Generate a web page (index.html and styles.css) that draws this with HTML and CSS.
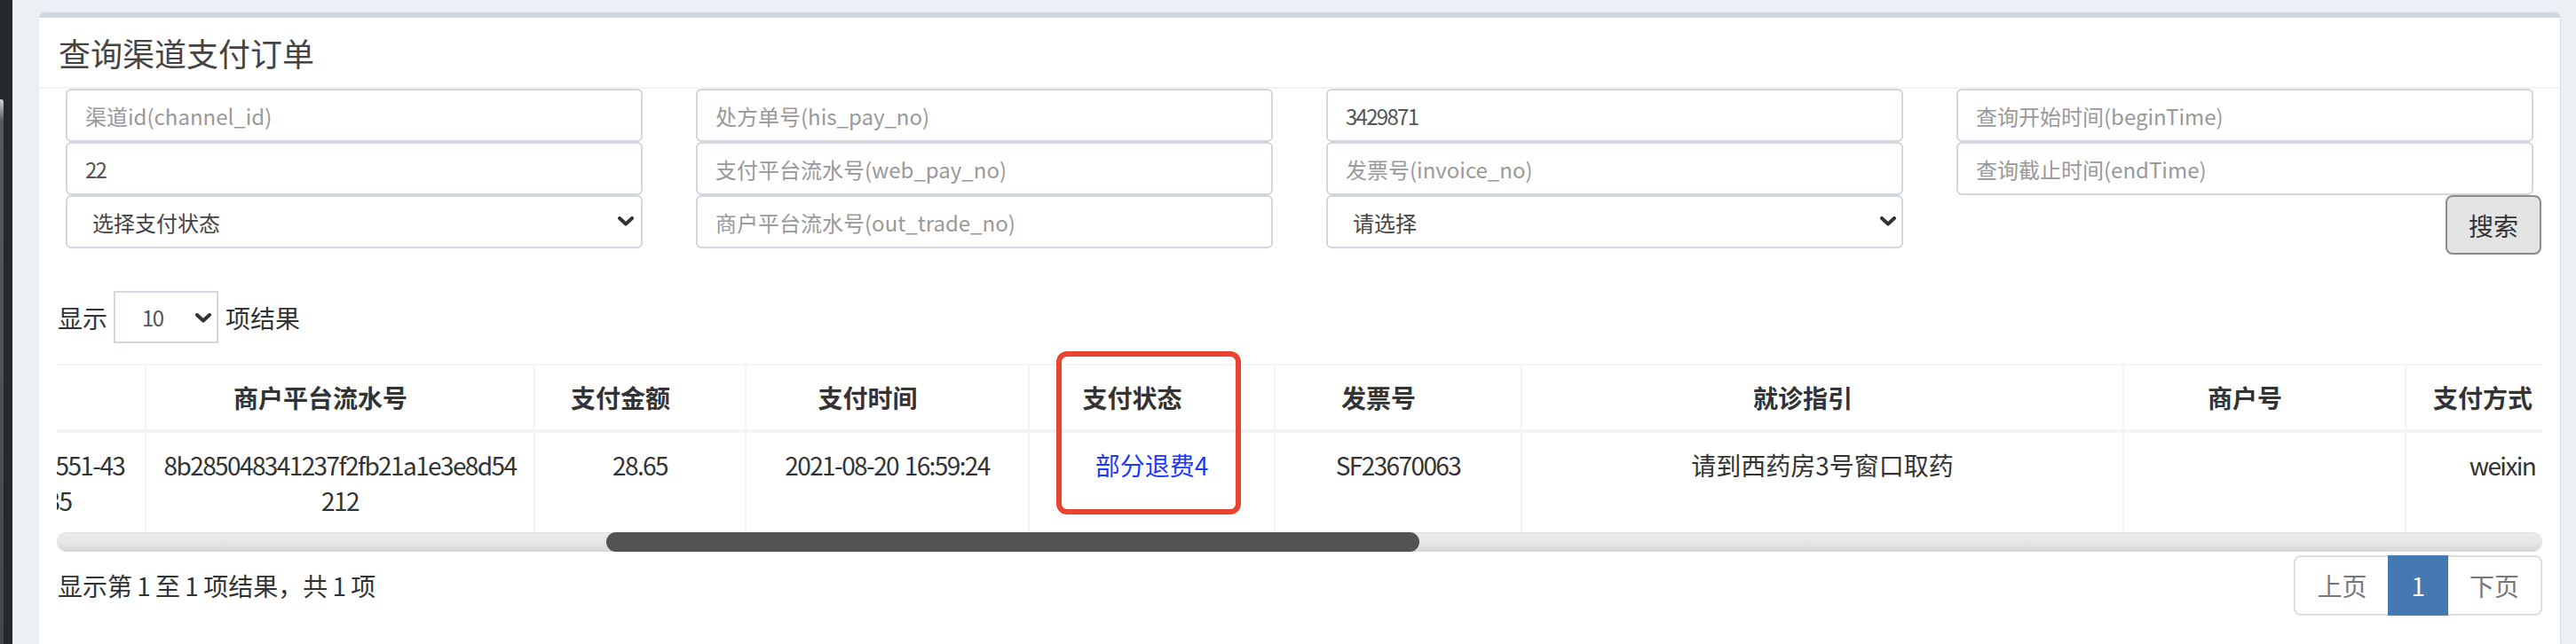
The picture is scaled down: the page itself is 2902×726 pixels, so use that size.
FILE: index.html
```html
<!DOCTYPE html>
<html lang="zh-CN">
<head>
<meta charset="utf-8">
<title>查询渠道支付订单</title>
<link rel="stylesheet" href="styles.css">
</head>
<body>
<div class="layout">
  <aside class="sidebar"><div class="sidebar-strip"></div></aside>
  <main class="content">
    <section class="box">
      <header class="box-header">
        <h3 class="box-title">查询渠道支付订单</h3>
      </header>
      <form class="filters">
        <div class="filter-col">
          <input class="field" type="text" placeholder="渠道id(channel_id)">
          <input class="field field-num" type="text" value="22">
          <div class="select-wrap">
            <select class="field field-select"><option>选择支付状态</option></select>
            <svg class="chevron" viewBox="0 0 18 11"><polyline points="2,2 9,8.5 16,2"/></svg>
          </div>
        </div>
        <div class="filter-col">
          <input class="field" type="text" placeholder="处方单号(his_pay_no)">
          <input class="field" type="text" placeholder="支付平台流水号(web_pay_no)">
          <input class="field" type="text" placeholder="商户平台流水号(out_trade_no)">
        </div>
        <div class="filter-col">
          <input class="field field-num" type="text" value="3429871">
          <input class="field" type="text" placeholder="发票号(invoice_no)">
          <div class="select-wrap">
            <select class="field field-select"><option>请选择</option></select>
            <svg class="chevron chevron-tight" viewBox="0 0 18 11"><polyline points="2,2 9,8.5 16,2"/></svg>
          </div>
        </div>
        <div class="filter-col">
          <input class="field" type="text" placeholder="查询开始时间(beginTime)">
          <input class="field" type="text" placeholder="查询截止时间(endTime)">
          <div class="btn-row"><button class="btn" type="button">搜索</button></div>
        </div>
      </form>
      <div class="box-body">
        <div class="length">
          <span>显示</span>
          <div class="select-wrap length-wrap">
            <select class="length-select"><option>10</option><option>25</option><option>50</option></select>
            <svg class="chevron chevron-small" viewBox="0 0 18 11"><polyline points="2,2 9,8.5 16,2"/></svg>
          </div>
          <span>项结果</span>
        </div>
        <div class="table-wrap">
          <div class="table-scroll">
            <table class="data-table">
              <thead>
                <tr>
                  <th class="w200">渠道id</th>
                  <th class="w300">渠道名称</th>
                  <th class="w400">处方单号</th>
                  <th class="w250">患者姓名</th>
                  <th class="w437">就诊卡号</th>
                  <th class="w404">支付平台流水号</th>
                  <th class="w438 anchor-col">商户平台流水号</th>
                  <th class="w238">支付金额</th>
                  <th class="w319">支付时间</th>
                  <th class="w277">支付状态</th>
                  <th class="w278">发票号</th>
                  <th class="w678">就诊指引</th>
                  <th class="w318">商户号</th>
                  <th class="w218">支付方式</th>
                  <th class="w300">退款金额</th>
                  <th class="w400">退款时间</th>
                  <th class="w500">退款流水号</th>
                  <th class="w400">门诊号</th>
                  <th class="w400">科室</th>
                  <th class="w400">医生</th>
                  <th class="w400">创建时间</th>
                  <th class="w400">更新时间</th>
                  <th class="w604">备注</th>
                </tr>
              </thead>
              <tbody>
                <tr>
                  <td class="latin">22</td>
                  <td>微信公众号</td>
                  <td class="latin">3429871</td>
                  <td>张**</td>
                  <td class="latin">0001938472</td>
                  <td class="latin">42000011472021082016551-4387016024920211435</td>
                  <td class="latin">8b285048341237f2fb21a1e3e8d54212</td>
                  <td class="latin">28.65</td>
                  <td class="latin">2021-08-20 16:59:24</td>
                  <td><a class="status-link" href="#">部分退费4</a></td>
                  <td class="latin">SF23670063</td>
                  <td>请到西药房3号窗口取药</td>
                  <td></td>
                  <td class="latin">weixin</td>
                  <td class="latin">4.00</td>
                  <td class="latin">2021-08-20 17:10:02</td>
                  <td class="latin">50301109102021082012345678</td>
                  <td class="latin">MZ2108200123</td>
                  <td>内科</td>
                  <td>李医生</td>
                  <td class="latin">2021-08-20 16:58:41</td>
                  <td class="latin">2021-08-20 17:10:02</td>
                  <td></td>
                </tr>
              </tbody>
            </table>
          </div>
          <div class="hscroll"><div class="hscroll-thumb"></div></div>
        </div>
        <div class="table-footer">
          <div class="info">显示第 1 至 1 项结果，共 1 项</div>
          <ul class="pagination">
            <li class="page disabled"><a class="page-link" href="#">上页</a></li>
            <li class="page active"><a class="page-link" href="#">1</a></li>
            <li class="page disabled"><a class="page-link" href="#">下页</a></li>
          </ul>
        </div>
      </div>
    </section>
  </main>
</div>
<div class="annotation"></div>
<script src="script.js"></script>
</body>
</html>
```

FILE: styles.css
```css
* {
  box-sizing: border-box;
}

html,
body {
  margin: 0;
  height: 100%;
}

body {
  position: relative;
  overflow: hidden;
  background: #ecf0f5;
  font-family: "Noto Sans CJK SC", "Noto Sans", sans-serif;
  font-size: 28px;
  line-height: 40px;
  color: #333;
}

.layout {
  display: flex;
  width: 100%;
  height: 726px;
}

.sidebar {
  width: 14px;
  flex: none;
  display: flex;
  background: #222a2e;
}

.sidebar-strip {
  width: 4px;
  margin-top: 112px;
  background: linear-gradient(#d4d4d4, #5a5a5a 24px, #474747);
  border-top-right-radius: 3px;
}

.content {
  flex: 1;
  min-width: 0;
  display: flex;
  flex-direction: column;
  padding: 14px 18px 0 30px;
}

.box {
  flex: 1;
  min-width: 0;
  background: #fff;
  border-top: 6px solid #d2d6de;
  border-radius: 6px 6px 0 0;
  box-shadow: 1px 0 1px rgba(0, 0, 0, 0.08);
}

.box-header {
  height: 80px;
  display: flex;
  align-items: center;
  padding: 0 22px;
  border-bottom: 2px solid #f4f4f4;
}

.box-title {
  margin: 0;
  font-size: 36px;
  line-height: 40px;
  font-weight: normal;
  color: #444;
}

.filters {
  display: grid;
  grid-template-columns: repeat(4, minmax(0, 1fr));
  margin: 0;
}

.filter-col {
  display: flex;
  flex-direction: column;
  min-width: 0;
  padding: 0 30px;
}

.field {
  display: block;
  width: 100%;
  height: 60px;
  margin: 0;
  padding: 0 20px;
  border: 2px solid #d2d6de;
  border-radius: 6px;
  background: #fff;
  font-family: inherit;
  font-size: 24px;
  color: #555;
  outline: none;
}

.field::placeholder {
  color: #999;
}

.field-num {
  letter-spacing: -1.7px;
}

.field-select {
  appearance: none;
  -webkit-appearance: none;
  padding-left: 28px;
  color: #444;
}

.select-wrap {
  position: relative;
}

.chevron {
  position: absolute;
  right: 10px;
  top: 24px;
  width: 18px;
  height: 11px;
  pointer-events: none;
}

.chevron polyline {
  fill: none;
  stroke: #333;
  stroke-width: 4;
  stroke-linecap: round;
  stroke-linejoin: round;
}

.chevron-tight {
  right: 8px;
}

.btn-row {
  display: flex;
  justify-content: flex-end;
  margin-right: -9px;
}

.btn {
  height: 67px;
  padding: 0 24px;
  border: 2px solid #8c8c8c;
  border-radius: 8px;
  background: #e4e4e4;
  font-family: inherit;
  font-size: 28px;
  line-height: 40px;
  color: #333;
}

.box-body {
  min-width: 0;
  padding: 0 20px;
}

.length {
  display: flex;
  align-items: center;
  height: 59px;
  margin-top: 41px;
  padding-left: 1px;
}

.length-wrap {
  margin: 0 8px 0 7px;
}

.length-select {
  display: block;
  width: 118px;
  height: 59px;
  padding: 0 0 0 30px;
  border: 2px solid #d2d6de;
  border-radius: 0;
  background: #fff;
  appearance: none;
  -webkit-appearance: none;
  font-family: inherit;
  font-size: 24px;
  letter-spacing: -1.5px;
  color: #555;
  outline: none;
}

.chevron-small {
  right: 8px;
  top: 25px;
}

.table-wrap {
  margin-top: 23px;
}

.table-scroll {
  width: 100%;
  overflow-x: auto;
  overflow-y: hidden;
  scrollbar-width: none;
}

.table-scroll::-webkit-scrollbar {
  display: none;
}

.hscroll {
  display: flex;
  height: 22px;
  border-radius: 11px;
  background: linear-gradient(#ececec, #e6e6e6 55%, #d6d6d6);
  box-shadow: inset 0 1px 1px rgba(0, 0, 0, 0.06);
}

.hscroll-thumb {
  width: 916px;
  margin-left: 619px;
  border-radius: 11px;
  background: #535353;
}

.data-table {
  width: 8559px;
  table-layout: fixed;
  border-collapse: separate;
  border-spacing: 0;
}

.data-table th,
.data-table td {
  box-sizing: border-box;
  border-left: 2px solid #f4f4f4;
  text-align: center;
  line-height: 40px;
}

.data-table th {
  padding: 16px 60px 16px 16px;
  border-top: 2px solid #f4f4f4;
  border-bottom: 4px solid #f4f4f4;
  font-weight: bold;
  vertical-align: middle;
  white-space: nowrap;
}

.data-table td {
  padding: 16px;
  vertical-align: top;
  word-break: break-all;
}

.data-table td.latin {
  letter-spacing: -1.6px;
  word-spacing: 2px;
}

.w200 { width: 200px; }
.w218 { width: 218px; }
.w238 { width: 238px; }
.w250 { width: 250px; }
.w277 { width: 277px; }
.w278 { width: 278px; }
.w300 { width: 300px; }
.w318 { width: 318px; }
.w319 { width: 319px; }
.w400 { width: 400px; }
.w404 { width: 404px; }
.w437 { width: 437px; }
.w438 { width: 438px; }
.w500 { width: 500px; }
.w604 { width: 604px; }
.w678 { width: 678px; }

.status-link {
  color: #1c39ff;
  text-decoration: none;
}

.table-footer {
  display: flex;
  justify-content: space-between;
  align-items: center;
  margin-top: 4px;
}

.info {
  padding-left: 1px;
  word-spacing: -1px;
}

.pagination {
  display: flex;
  list-style: none;
  margin: 0;
  padding: 0;
}

.page-link {
  display: block;
  padding: 12px 24px;
  margin-left: -2px;
  border: 2px solid #ddd;
  line-height: 40px;
  color: #777;
  text-decoration: none;
  background: #fff;
}

.page:first-child .page-link {
  margin-left: 0;
  border-radius: 8px 0 0 8px;
}

.page:last-child .page-link {
  border-radius: 0 8px 8px 0;
}

.page.active .page-link {
  position: relative;
  background: #4479b1;
  border-color: #4479b1;
  color: #fff;
}

.annotation {
  position: absolute;
  left: 1190px;
  top: 396px;
  width: 208px;
  height: 184px;
  border: 6px solid #ea4430;
  border-radius: 12px;
  pointer-events: none;
}
```

FILE: script.js
```js
(function () {
  var wrap = document.querySelector('.table-scroll');
  var anchor = document.querySelector('.anchor-col');
  var track = document.querySelector('.hscroll');
  var thumb = document.querySelector('.hscroll-thumb');

  function syncThumb() {
    var trackWidth = track.clientWidth;
    var visible = wrap.clientWidth;
    var total = wrap.scrollWidth;
    if (total <= visible) {
      thumb.style.width = trackWidth + 'px';
      thumb.style.marginLeft = '0px';
      return;
    }
    var thumbWidth = Math.round(trackWidth * visible / total);
    var left = Math.round(wrap.scrollLeft / (total - visible) * (trackWidth - thumbWidth));
    thumb.style.width = thumbWidth + 'px';
    thumb.style.marginLeft = left + 'px';
  }

  function place() {
    wrap.scrollLeft = 0;
    var offset = anchor.getBoundingClientRect().left - wrap.getBoundingClientRect().left;
    wrap.scrollLeft = offset - 99;
    syncThumb();
  }

  wrap.addEventListener('scroll', syncThumb);
  place();
  window.addEventListener('load', place);
  if (document.fonts && document.fonts.ready) {
    document.fonts.ready.then(place);
  }
})();
```
